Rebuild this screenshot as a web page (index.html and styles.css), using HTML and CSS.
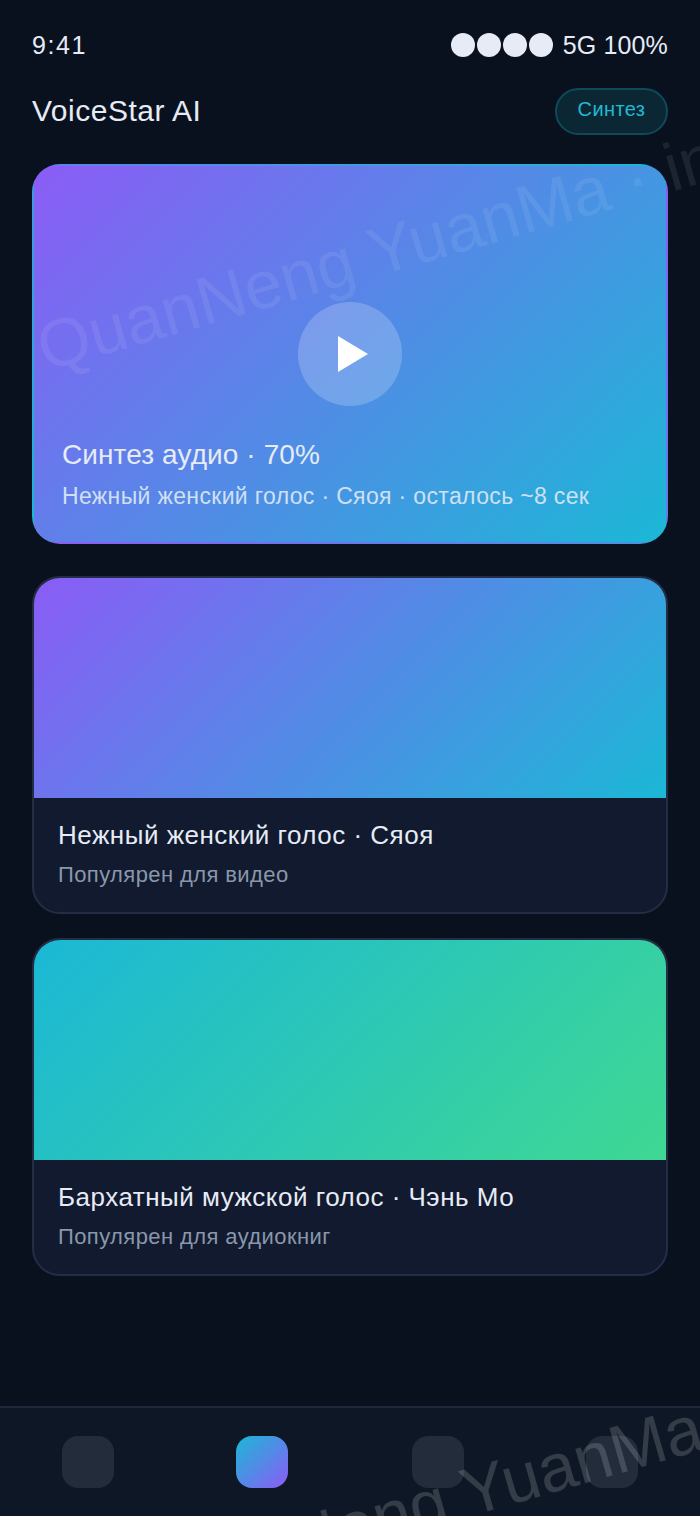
FILE: index.html
```html
<!DOCTYPE html>
<html lang="ru">
<head>
<meta charset="utf-8">
<title>VoiceStar AI</title>
<link rel="stylesheet" href="styles.css">
</head>
<body>
<div class="app">
  <div class="status">
    <span class="time">9:41</span>
    <div class="status-right">
      <div class="dots"><i class="dot"></i><i class="dot"></i><i class="dot"></i><i class="dot"></i></div>
      <span class="net">5G 100%</span>
    </div>
  </div>
  <header class="head">
    <h1 class="brand">VoiceStar AI</h1>
    <button class="pill">Синтез</button>
  </header>
  <main class="list">
    <section class="hero">
      <div class="play"><svg class="play-ico" viewBox="0 0 30 36"><polygon points="0,0 30,18 0,36"/></svg></div>
      <div class="hero-title">Синтез аудио · 70%</div>
      <div class="hero-sub">Нежный женский голос · Сяоя · осталось ~8 сек</div>
    </section>
    <article class="card">
      <div class="thumb thumb-a"></div>
      <div class="info">
        <div class="name">Нежный женский голос · Сяоя</div>
        <div class="meta">Популярен для видео</div>
      </div>
    </article>
    <article class="card">
      <div class="thumb thumb-b"></div>
      <div class="info">
        <div class="name">Бархатный мужской голос · Чэнь Мо</div>
        <div class="meta">Популярен для аудиокниг</div>
      </div>
    </article>
  </main>
  <nav class="nav">
    <i class="tab"></i><i class="tab tab-on"></i><i class="tab"></i><i class="tab"></i>
  </nav>
  <div class="mark mark-a">QuanNeng YuanMa · in</div>
  <div class="mark mark-b">QuanNeng YuanMa</div>
</div>
</body>
</html>
```
FILE: styles.css
```css
* { box-sizing: border-box; }
html, body { margin: 0; padding: 0; }
body {
  background: #0a111e;
  color: #e6ebf5;
  font-family: "Liberation Sans", Arial, sans-serif;
}
.app {
  position: relative;
  width: 700px;
  height: 1516px;
  overflow: hidden;
  display: flex;
  flex-direction: column;
  background: #0a111e;
}
.status {
  display: flex;
  justify-content: space-between;
  align-items: center;
  height: 42px;
  margin-top: 24px;
  padding: 0 32px;
  font-size: 25px;
}
.time { letter-spacing: 1.6px; }
.net { letter-spacing: 0.15px; }
.status-right { display: flex; align-items: center; gap: 10px; }
.dots { display: flex; gap: 2px; }
.dot { width: 24px; height: 24px; border-radius: 50%; background: #e6ebf5; }
.head {
  display: flex;
  justify-content: space-between;
  align-items: center;
  height: 74px;
  margin-top: 8px;
  margin-bottom: 16px;
  padding: 0 32px;
}
.brand { margin: 0; font-size: 30px; font-weight: 400; letter-spacing: 0.5px; }
.pill {
  width: 113px;
  height: 47px;
  border-radius: 24px;
  border: 2px solid #0f4a5a;
  background: #0a2733;
  color: #22b8d6;
  font: inherit;
  font-size: 20px;
  letter-spacing: 0.4px;
  padding: 0 0 4px;
}
.list { display: flex; flex-direction: column; padding: 0 32px; }
.hero {
  height: 380px;
  border: 2px solid transparent;
  border-radius: 28px;
  background: linear-gradient(135deg, #8b5cf6, #1bb8d6);
  display: flex;
  flex-direction: column;
  padding: 136px 28px 0;
  margin-bottom: 32px;
}
.play {
  align-self: center;
  width: 104px;
  height: 104px;
  border-radius: 50%;
  background: rgba(255,255,255,0.2);
  display: flex;
  align-items: center;
  justify-content: center;
  margin-bottom: 32px;
}
.play-ico { width: 30px; height: 36px; fill: #fff; margin-left: 6px; }
.hero-title { font-size: 28px; line-height: 34px; color: #e6ebf5; letter-spacing: 0.1px; }
.hero-sub { font-size: 23px; line-height: 30px; margin-top: 9px; color: #cfe0f5; letter-spacing: 0.35px; }
.card {
  height: 338px;
  border: 2px solid #232e45;
  border-radius: 28px;
  background: #111a2e;
  overflow: hidden;
  margin-bottom: 24px;
}
.thumb { height: 220px; }
.thumb-a { background: linear-gradient(135deg, #8b5cf6, #1bb8d6); }
.thumb-b { background: linear-gradient(135deg, #1bb8d6, #3fd893); }
.info { padding: 20px 24px 0; }
.name { font-size: 26px; line-height: 34px; color: #e6ebf5; letter-spacing: 0.5px; }
.meta { font-size: 22px; line-height: 28px; margin-top: 9px; color: #8a97ab; letter-spacing: 0.4px; }
.nav {
  margin-top: auto;
  height: 110px;
  border-top: 2px solid #1e293b;
  background: #0e1726;
  display: grid;
  grid-template-columns: repeat(4, 175px);
  justify-items: center;
  padding-top: 28px;
}
.tab { width: 52px; height: 52px; border-radius: 16px; background: #232c3b; }
.tab:nth-child(even) { margin-left: -1px; }
.tab-on { background: linear-gradient(135deg, #1bb8d6, #8b5cf6); }
.mark {
  position: absolute;
  white-space: nowrap;
  font-family: "Liberation Sans", sans-serif;
  font-size: 67.5px;
  line-height: 67px;
  height: 67px;
  color: rgba(255,255,255,0.08);
  transform-origin: 0 100%;
  transform: rotate(-16deg);
  pointer-events: none;
}
.mark-a { left: 48px; top: 314px; }
.mark-b { left: 141px; top: 1554px; color: rgba(255,255,255,0.16); }
```
